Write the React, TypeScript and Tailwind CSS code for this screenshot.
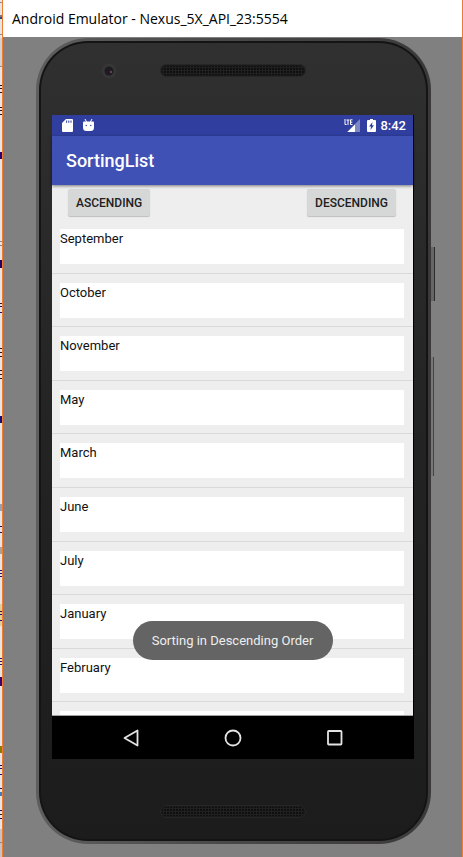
import type { ReactNode } from "react";

const months = [
  "September",
  "October",
  "November",
  "May",
  "March",
  "June",
  "July",
  "January",
  "February",
  "December",
];

// Sliver of the code editor that stays visible behind the emulator window:
// [top, height, colour]
const editorMarks: [number, number, string][] = [
  [2, 1, "#909090"],
  [15, 2, "#8a7a80"],
  [17, 2, "#2c4a80"],
  [34, 1, "#8c8c8c"],
  [38, 28, "#d0d3d6"],
  [66, 1, "#909090"],
  [85, 1, "#301018"],
  [88, 1, "#301018"],
  [92, 1, "#301018"],
  [107, 1, "#301018"],
  [110, 1, "#301018"],
  [114, 1, "#301018"],
  [152, 7, "#2c0070"],
  [241, 1, "#858585"],
  [245, 1, "#858585"],
  [260, 8, "#200060"],
  [303, 1, "#401020"],
  [306, 1, "#10107a"],
  [312, 1, "#10107a"],
  [348, 1, "#301018"],
  [352, 1, "#301018"],
  [356, 1, "#301018"],
  [370, 1, "#301018"],
  [374, 1, "#301018"],
  [378, 1, "#301018"],
  [416, 7, "#10107a"],
  [504, 7, "#94a2b5"],
  [526, 1, "#10107a"],
  [532, 1, "#10107a"],
  [547, 7, "#a9a398"],
  [570, 1, "#10107a"],
  [573, 1, "#10107a"],
  [576, 1, "#10107a"],
  [604, 22, "#dccf9c"],
  [611, 1, "#401020"],
  [614, 1, "#10107a"],
  [620, 1, "#10107a"],
  [648, 20, "#efe8cc"],
  [658, 1, "#10107a"],
  [661, 1, "#10107a"],
  [664, 1, "#10107a"],
  [677, 9, "#3a0070"],
  [746, 7, "#8c7a00"],
  [765, 1, "#10107a"],
  [768, 1, "#10107a"],
  [774, 1, "#10107a"],
  [788, 1, "#10107a"],
  [792, 4, "#3a80c0"],
  [810, 1, "#10107a"],
  [814, 1, "#202020"],
  [818, 1, "#10107a"],
  [829, 28, "#c4c4c4"],
  [842, 1, "#858585"],
];

function EditorSliver() {
  return (
    <svg className="w-[2px] shrink-0 self-stretch bg-[#e4e6e6]" aria-hidden="true">
      {editorMarks.map(([y, h, fill]) => (
        <rect key={y} x="0" y={y} width="2" height={h} fill={fill} />
      ))}
    </svg>
  );
}

function Grille({ id }: { id: string }) {
  return (
    <svg width="146" height="13" viewBox="0 0 146 13" aria-hidden="true">
      <defs>
        <pattern id={id} width="3" height="3" patternUnits="userSpaceOnUse">
          <rect width="3" height="3" fill="#202020" />
          <rect x="1" y="1" width="2" height="2" fill="#0f0f0f" />
        </pattern>
      </defs>
      <rect x="0.5" y="0.5" width="145" height="12" rx="6" fill="#1a1a1a" stroke="#262626" />
      <rect x="2" y="2" width="142" height="9" rx="4.5" fill={`url(#${id})`} />
    </svg>
  );
}

function StatusBar() {
  return (
    <div className="flex h-[21px] items-center bg-[#303f9f] pl-2.5 pr-[7px] text-white">
      <svg width="11" height="13" viewBox="0 0 11 13" aria-label="SD card">
        <path d="M4 0h6a1 1 0 0 1 1 1v11a1 1 0 0 1-1 1H1a1 1 0 0 1-1-1V4z" fill="#fff" />
        <path d="M4.6 1.5v2.3M6.8 1.5v2.3M9 1.5v2.3" stroke="#303f9f" strokeWidth="1" />
      </svg>
      <svg className="ml-2.5" width="11" height="13" viewBox="0 0 11 13" aria-label="Debugging">
        <path d="M2 0l1.600 3M9 0L7.400 3" stroke="#fff" strokeWidth="1" />
        <path d="M1 2.600h9q1 0 1 1v5a3.500 3.500 0 0 1-3.500 3.500h-4A3.500 3.500 0 0 1 0 8.600v-5q0-1 1-1z" fill="#fff" />
        <circle cx="3.200" cy="6.500" r="0.700" fill="#303f9f" />
        <circle cx="7.800" cy="6.500" r="0.700" fill="#303f9f" />
      </svg>
      <svg className="ml-auto" width="17" height="13" viewBox="0 0 17 13" aria-label="LTE signal">
        <path d="M3 13L16 0v13z" fill="#7d87c4" />
        <path d="M0 0h9.500v6.500H0z" fill="#303f9f" />
        <path d="M3.500 13L11 5.500V13z" fill="#fff" />
        <path d="M1 0v5.500h1.500M2.500 1h3M4 1v5M8.500 0.800h-2v4.700h2M6.500 3.200h1.800" fill="none" stroke="#fff" strokeWidth="1" />
      </svg>
      <svg className="ml-1.5" width="9" height="13" viewBox="0 0 9 13" aria-label="Charging">
        <path d="M3 0h3v1h2a1 1 0 0 1 1 1v10a1 1 0 0 1-1 1H1a1 1 0 0 1-1-1V2a1 1 0 0 1 1-1h2z" fill="#fff" />
        <path d="M5.500 3L2 7.500h2L3.500 11 7 6.300H5z" fill="#303f9f" />
      </svg>
      <span className="ml-1 text-[13px] leading-5 font-medium">8:42</span>
    </div>
  );
}

function RaisedButton({ children }: { children: ReactNode }) {
  return (
    <button
      type="button"
      className="h-[27px] rounded-xs bg-[#d6d7d7] px-2 pt-px text-[12px] leading-4 font-medium text-[#212121] shadow-[0_1px_1px_rgba(0,0,0,0.2)]"
    >
      {children}
    </button>
  );
}

function NavigationBar() {
  return (
    <nav className="flex h-[43px] items-center justify-center gap-[78px] bg-black">
      <button type="button" aria-label="Back" className="flex size-6 items-center justify-center">
        <svg width="18" height="18" viewBox="0 0 18 18" fill="none" stroke="#e4e4e4" strokeWidth="1.800" strokeLinejoin="round">
          <path d="M15.500 1.500v15L2.500 9z" />
        </svg>
      </button>
      <button type="button" aria-label="Home" className="flex size-6 items-center justify-center">
        <svg width="18" height="18" viewBox="0 0 18 18" fill="none" stroke="#e4e4e4" strokeWidth="1.800">
          <circle cx="9" cy="9" r="7.500" />
        </svg>
      </button>
      <button type="button" aria-label="Overview" className="flex size-6 items-center justify-center">
        <svg width="18" height="18" viewBox="0 0 18 18" fill="none" stroke="#e4e4e4" strokeWidth="1.800">
          <rect x="2" y="2" width="13.500" height="13.500" rx="0.800" />
        </svg>
      </button>
    </nav>
  );
}

function Screen() {
  return (
    <div className="relative border-r border-black font-[Roboto,sans-serif]">
      <StatusBar />
      <header className="relative flex h-[49px] items-center bg-[#3f51b5] px-3.5 shadow-[0_1px_3px_rgba(0,0,0,0.5)]">
        <h1 className="text-lg leading-6 font-medium text-white">SortingList</h1>
      </header>
      <main className="h-[531px] overflow-hidden border-b border-[#a0a0a0] bg-[#eeeeee]">
        <div className="flex h-[35px] items-center justify-between pr-[17px] pl-4">
          <RaisedButton>ASCENDING</RaisedButton>
          <RaisedButton>DESCENDING</RaisedButton>
        </div>
        <ul className="grid h-[536px] auto-rows-fr">
          {months.map((month) => (
            <li key={month} className="border-b border-[#d9d9d9] pt-[9px] pr-[9px] pl-2">
              <div className="h-[35px] bg-white text-[13px] leading-5 text-[#111]">{month}</div>
            </li>
          ))}
        </ul>
      </main>
      <NavigationBar />
      <div
        role="status"
        className="absolute bottom-[99px] left-1/2 flex h-[39px] w-[200px] -translate-x-1/2 items-center justify-center rounded-full bg-[#646464] text-[13px] leading-5 whitespace-nowrap text-[#eee]"
      >
        Sorting in Descending Order
      </div>
    </div>
  );
}

function Phone() {
  return (
    <div className="relative mt-px mr-[31px] ml-[33px] rounded-[52px] bg-linear-to-r from-[#5e5e5e] via-[#484848] to-[#3c393a] p-[3px]">
      <div className="absolute top-[209px] -right-1 h-[54px] w-1 border-r border-[#2c2c2c] bg-[#666]" />
      <div className="absolute top-[319px] -right-[3px] h-[119px] w-[3px] border-r border-[#444] bg-[#777]" />
      <div className="rounded-[49px] bg-[#141414] p-[2px]">
        <div className="rounded-[47px] bg-linear-to-b from-[#303030] via-[#232323] to-[#1c1c1c] pr-3 pl-[11px]">
          <div className="relative flex h-[72px] items-start justify-center pt-[21px]">
            <svg className="absolute top-5 left-[49px]" width="16" height="16" viewBox="0 0 16 16" aria-hidden="true">
              <circle cx="8" cy="8" r="7.500" fill="#363636" />
              <circle cx="8" cy="8" r="4.500" fill="#1d1b22" />
              <circle cx="10" cy="9" r="1.200" fill="#6a4050" />
            </svg>
            <Grille id="earpiece" />
          </div>
          <Screen />
          <div className="flex h-20 items-start justify-center pt-[46px]">
            <Grille id="speaker" />
          </div>
        </div>
      </div>
    </div>
  );
}

export default function App() {
  return (
    <div className="flex min-h-screen overflow-hidden">
      <EditorSliver />
      <section className="flex min-w-0 flex-1 flex-col border-x border-[#f27a33] bg-[#808080]">
        <div className="flex h-[37px] items-center bg-white pl-[9px] font-['Open_Sans',sans-serif] text-sm leading-5 text-black">
          Android Emulator - Nexus_5X_API_23:5554
        </div>
        <Phone />
      </section>
    </div>
  );
}
